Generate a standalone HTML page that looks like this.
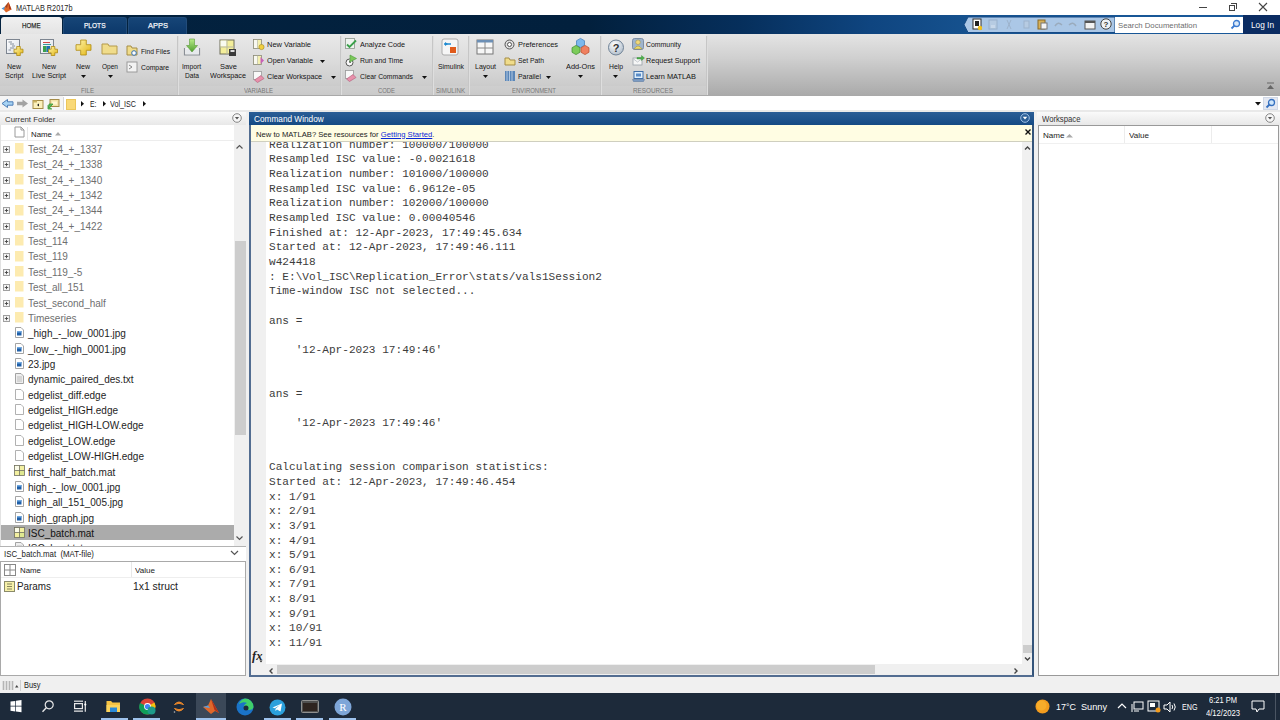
<!DOCTYPE html>
<html><head><meta charset="utf-8">
<style>
*{box-sizing:border-box;margin:0;padding:0}
html,body{width:1280px;height:720px;overflow:hidden;background:#f0f0f0;font-family:"Liberation Sans",sans-serif;position:relative}
body>div,div>div{position:absolute}
.t{white-space:pre}
svg{position:absolute;overflow:visible}
</style></head><body>
<div style="left:0px;top:0px;width:1280px;height:15px;background:#fff"></div>
<svg style="position:absolute;left:0px;top:0px" width="15" height="15" viewBox="0 0 15 15"><path d="M1.5 8.5 L5 6.5 L6.5 8.3 L4 10 Z" fill="#4f95d6"/><path d="M5 6.5 L8.5 2 L11.5 9.5 L6 12.5 L4 10 Z" fill="#e0692a"/><path d="M8.5 2 L11.5 9.5 L9.2 9 Z" fill="#a8361a"/><path d="M5 6.5 L8.5 2 L7 8 Z" fill="#7a2a18" opacity="0.6"/></svg>
<div class="t" style="left:16px;top:3.97px;font-size:8.3px;line-height:8.3px;color:#222;font-family:'Liberation Sans',sans-serif;transform:scaleX(0.8832);transform-origin:0 0;">MATLAB R2017b</div>
<div style="left:1199px;top:7px;width:8px;height:1px;background:#444"></div>
<div style="left:1229px;top:5px;width:6px;height:6px;border:1px solid #444"></div><div style="left:1231px;top:3px;width:6px;height:6px;border-top:1px solid #444;border-right:1px solid #444"></div>
<svg style="position:absolute;left:1258px;top:2px" width="10" height="10" viewBox="0 0 10 10"><path d="M1 1 L9 9 M9 1 L1 9" stroke="#444" stroke-width="1.1"/></svg>
<div style="left:0px;top:15px;width:1280px;height:19px;background:linear-gradient(90deg,#03223f 0%,#02203d 46%,#062f5c 58%,#0f4580 68%,#16528f 76%,#1a5a9c 100%)"></div>
<div style="left:1px;top:17px;width:61px;height:17px;background:linear-gradient(#f0f0f0,#e4e4e4);border-radius:3px 3px 0 0"></div>
<div class="t" style="left:22px;top:21.83px;font-size:8px;line-height:8px;color:#2a2a2a;font-family:'Liberation Sans',sans-serif;transform:scaleX(0.7708);transform-origin:0 0;-webkit-text-stroke:0.25px #2a2a2a">HOME</div>
<div style="left:63px;top:17px;width:64px;height:17px;background:linear-gradient(#164577,#0c386a);border:1px solid #224c7a;border-bottom:none;border-radius:3px 3px 0 0"></div>
<div class="t" style="left:84px;top:21.83px;font-size:8px;line-height:8px;color:#f4f6fa;font-family:'Liberation Sans',sans-serif;transform:scaleX(0.8196);transform-origin:0 0;-webkit-text-stroke:0.25px #f4f6fa">PLOTS</div>
<div style="left:128px;top:17px;width:59px;height:17px;background:linear-gradient(#164577,#0c386a);border:1px solid #224c7a;border-bottom:none;border-radius:3px 3px 0 0"></div>
<div class="t" style="left:148px;top:21.83px;font-size:8px;line-height:8px;color:#f4f6fa;font-family:'Liberation Sans',sans-serif;transform:scaleX(0.9370);transform-origin:0 0;-webkit-text-stroke:0.25px #f4f6fa">APPS</div>
<svg style="position:absolute;left:962px;top:16px" width="153" height="18" viewBox="0 0 153 18"><path d="M6 1 H153 V16.5 H6 L2 8.75 Z" fill="#abc7e6" stroke="#164a85" stroke-width="1"/></svg>
<svg style="position:absolute;left:972px;top:18px" width="10" height="12" viewBox="0 0 10 12"><rect x="1" y="1" width="8" height="10" fill="#fff" stroke="#333"/><rect x="3" y="3" width="4" height="5" fill="#222"/><circle cx="8" cy="10" r="2.2" fill="#f3c11b"/></svg>
<svg style="position:absolute;left:988px;top:19px" width="10" height="11" viewBox="0 0 10 11"><rect x="1" y="1" width="8" height="9" fill="#b6cbe2" stroke="#98b0cb"/><rect x="3" y="6" width="4" height="3" fill="#c8d8ea"/></svg>
<svg style="position:absolute;left:1004px;top:19px" width="10" height="11" viewBox="0 0 10 11"><path d="M3 10 L7 1 M7 10 L3 1" stroke="#9db3cc" stroke-width="1"/></svg>
<svg style="position:absolute;left:1020px;top:19px" width="10" height="11" viewBox="0 0 10 11"><rect x="4" y="2" width="5" height="7" fill="#b6cbe2" stroke="#9db3cc"/></svg>
<svg style="position:absolute;left:1037px;top:18px" width="11" height="12" viewBox="0 0 11 12"><rect x="1" y="2" width="7" height="9" fill="#d6b15a" stroke="#8a6a28"/><rect x="4" y="5" width="6" height="6" fill="#f4f4f4" stroke="#777"/></svg>
<svg style="position:absolute;left:1053px;top:19px" width="11" height="11" viewBox="0 0 11 11"><path d="M2 7 Q5 2 9 6" stroke="#9aabbd" stroke-width="1.5" fill="none"/></svg>
<svg style="position:absolute;left:1067px;top:19px" width="11" height="11" viewBox="0 0 11 11"><path d="M2 6 Q6 2 9 7" stroke="#9aabbd" stroke-width="1.5" fill="none"/></svg>
<svg style="position:absolute;left:1084px;top:19px" width="12" height="11" viewBox="0 0 12 11"><rect x="1" y="2" width="10" height="8" fill="#f2f2f2" stroke="#555"/><rect x="1" y="2" width="10" height="2" fill="#555"/></svg>
<svg style="position:absolute;left:1100px;top:18px" width="12" height="12" viewBox="0 0 12 12"><circle cx="6" cy="6" r="5.2" fill="#eef2f6" stroke="#444" stroke-width="1"/><text x="6" y="9" font-size="8" text-anchor="middle" font-family="Liberation Sans" font-weight="bold" fill="#333">?</text></svg>
<div style="left:1115px;top:17px;width:128px;height:16px;background:#fff"></div>
<div class="t" style="left:1118px;top:22.03px;font-size:8px;line-height:8px;color:#6d6d6d;font-family:'Liberation Sans',sans-serif;transform:scaleX(0.9707);transform-origin:0 0;">Search Documentation</div>
<svg style="position:absolute;left:1230px;top:19px" width="11" height="11" viewBox="0 0 11 11"><circle cx="6.5" cy="4.5" r="3" fill="#dbe9f8" stroke="#3d7bd0" stroke-width="1.3"/><path d="M4.5 6.5 L1.5 9.5" stroke="#3d7bd0" stroke-width="1.8"/></svg>
<div style="left:1243px;top:15px;width:37px;height:19px;background:#0b2c62"></div>
<div class="t" style="left:1251px;top:20.57px;font-size:8.3px;line-height:8.3px;color:#ffffff;font-family:'Liberation Sans',sans-serif;transform:scaleX(0.9967);transform-origin:0 0;">Log In</div>
<div style="left:0px;top:34px;width:1280px;height:62px;background:linear-gradient(#e4e4e4 0%,#cfcfcf 40%,#a9a9a9 100%)"></div>
<div style="left:0px;top:34px;width:706px;height:52px;background:linear-gradient(#e9e9e9 0%,#dcdcdc 50%,#cbcbcb 100%)"></div>
<div style="left:0px;top:86px;width:706px;height:10px;background:linear-gradient(#cfcfcf,#c9c9c9)"></div>
<div style="left:0px;top:95px;width:1280px;height:1px;background:#a9a9a9"></div>
<div style="left:177px;top:36px;width:1px;height:59px;background:#c6c6c6"></div>
<div style="left:178px;top:36px;width:1px;height:59px;background:#dedede"></div>
<div style="left:340px;top:36px;width:1px;height:59px;background:#c6c6c6"></div>
<div style="left:341px;top:36px;width:1px;height:59px;background:#dedede"></div>
<div style="left:432px;top:36px;width:1px;height:59px;background:#c6c6c6"></div>
<div style="left:433px;top:36px;width:1px;height:59px;background:#dedede"></div>
<div style="left:468px;top:36px;width:1px;height:59px;background:#c6c6c6"></div>
<div style="left:469px;top:36px;width:1px;height:59px;background:#dedede"></div>
<div style="left:600px;top:36px;width:1px;height:59px;background:#c6c6c6"></div>
<div style="left:601px;top:36px;width:1px;height:59px;background:#dedede"></div>
<div style="left:706px;top:36px;width:1px;height:59px;background:#c6c6c6"></div>
<div style="left:707px;top:36px;width:1px;height:59px;background:#dedede"></div>
<div class="t" style="left:80.5px;top:88.00px;font-size:6.5px;line-height:6.5px;color:#777777;font-family:'Liberation Sans',sans-serif;transform:scaleX(0.9470);transform-origin:0 0;">FILE</div>
<div class="t" style="left:243.5px;top:88.00px;font-size:6.5px;line-height:6.5px;color:#777777;font-family:'Liberation Sans',sans-serif;transform:scaleX(0.9262);transform-origin:0 0;">VARIABLE</div>
<div class="t" style="left:377.5px;top:88.00px;font-size:6.5px;line-height:6.5px;color:#777777;font-family:'Liberation Sans',sans-serif;transform:scaleX(0.9052);transform-origin:0 0;">CODE</div>
<div class="t" style="left:435.5px;top:88.00px;font-size:6.5px;line-height:6.5px;color:#777777;font-family:'Liberation Sans',sans-serif;transform:scaleX(0.9446);transform-origin:0 0;">SIMULINK</div>
<div class="t" style="left:512.0px;top:88.00px;font-size:6.5px;line-height:6.5px;color:#777777;font-family:'Liberation Sans',sans-serif;transform:scaleX(0.9161);transform-origin:0 0;">ENVIRONMENT</div>
<div class="t" style="left:633.0px;top:88.00px;font-size:6.5px;line-height:6.5px;color:#777777;font-family:'Liberation Sans',sans-serif;transform:scaleX(0.9715);transform-origin:0 0;">RESOURCES</div>
<svg style="position:absolute;left:5px;top:38px" width="20" height="19" viewBox="0 0 20 19"><defs><linearGradient id="gp" x1="0" y1="0" x2="1" y2="1"><stop offset="0" stop-color="#fff6b0"/><stop offset="1" stop-color="#e2b410"/></linearGradient><linearGradient id="gd" x1="0" y1="0" x2="1" y2="1"><stop offset="0" stop-color="#ffffff"/><stop offset="1" stop-color="#d8dde6"/></linearGradient></defs><rect x="1.5" y="1.5" width="13" height="14" fill="url(#gd)" stroke="#7d8590" stroke-width="1"/><path d="M3.5 4 H7 M5 6 H9 M7 8 H10 M5 10 H9 M3.5 12 H6" stroke="#6a7686" stroke-width="0.8"/><path d="M11.7 8.5 H15.3 V11.2 H18.0 V14.8 H15.3 V17.5 H11.7 V14.8 H9.0 V11.2 H11.7 Z" fill="url(#gp)" stroke="#b08a10" stroke-width="0.8"/></svg>
<div class="t" style="left:7.0px;top:62.90px;font-size:7.8px;line-height:7.8px;color:#141414;font-family:'Liberation Sans',sans-serif;transform:scaleX(0.8972);transform-origin:0 0;">New</div>
<div class="t" style="left:4.75px;top:71.90px;font-size:7.8px;line-height:7.8px;color:#141414;font-family:'Liberation Sans',sans-serif;transform:scaleX(0.9278);transform-origin:0 0;">Script</div>
<svg style="position:absolute;left:39px;top:38px" width="20" height="19" viewBox="0 0 20 19"><rect x="1.5" y="1.5" width="13" height="14" fill="url(#gd)" stroke="#7d8590" stroke-width="1"/><path d="M4 4.5 H11" stroke="#d04848" stroke-width="1"/><path d="M4 6.5 H12" stroke="#3a9a9a" stroke-width="1"/><rect x="4" y="8" width="3.5" height="6" fill="#3aa04a"/><rect x="7.5" y="8" width="3.5" height="6" fill="#1f70b0"/><path d="M12.2 8.5 H15.8 V11.2 H18.5 V14.8 H15.8 V17.5 H12.2 V14.8 H9.5 V11.2 H12.2 Z" fill="url(#gp)" stroke="#b08a10" stroke-width="0.8"/></svg>
<div class="t" style="left:42.0px;top:62.90px;font-size:7.8px;line-height:7.8px;color:#141414;font-family:'Liberation Sans',sans-serif;transform:scaleX(0.8972);transform-origin:0 0;">New</div>
<div class="t" style="left:32.0px;top:71.90px;font-size:7.8px;line-height:7.8px;color:#141414;font-family:'Liberation Sans',sans-serif;transform:scaleX(0.9337);transform-origin:0 0;">Live Script</div>
<svg style="position:absolute;left:75px;top:39px" width="18" height="17" viewBox="0 0 18 17"><path d="M5.7 1.0 H11.3 V5.7 H16.0 V11.3 H11.3 V16.0 H5.7 V11.3 H1.0 V5.7 H5.7 Z" fill="url(#gp)" stroke="#b08a10" stroke-width="0.8"/></svg>
<div class="t" style="left:76.0px;top:62.90px;font-size:7.8px;line-height:7.8px;color:#141414;font-family:'Liberation Sans',sans-serif;transform:scaleX(0.8972);transform-origin:0 0;">New</div>
<svg style="position:absolute;left:80.5px;top:74.5px" width="6" height="4" viewBox="0 0 6 4"><path d="M0 0 H5 L2.5 3 Z" fill="#111"/></svg>
<svg style="position:absolute;left:101px;top:42px" width="18" height="13" viewBox="0 0 18 13"><path d="M1 2 H7 L8 4 H16 V12 H1 Z" fill="#f0dc8a" stroke="#b49a4a"/></svg>
<div class="t" style="left:102.0px;top:62.90px;font-size:7.8px;line-height:7.8px;color:#141414;font-family:'Liberation Sans',sans-serif;transform:scaleX(0.8385);transform-origin:0 0;">Open</div>
<svg style="position:absolute;left:107.5px;top:74.5px" width="6" height="4" viewBox="0 0 6 4"><path d="M0 0 H5 L2.5 3 Z" fill="#111"/></svg>
<svg style="position:absolute;left:126px;top:45px" width="13" height="12" viewBox="0 0 13 12"><path d="M1 1 H5 L6 3 H11 V10 H1 Z" fill="#f0dc8a" stroke="#a58d45"/><circle cx="8" cy="8" r="2.3" fill="#fff" stroke="#3570b0"/></svg>
<div class="t" style="left:141px;top:48.40px;font-size:7.8px;line-height:7.8px;color:#141414;font-family:'Liberation Sans',sans-serif;transform:scaleX(0.8577);transform-origin:0 0;">Find Files</div>
<svg style="position:absolute;left:126px;top:61px" width="12" height="12" viewBox="0 0 12 12"><rect x="1" y="1" width="10" height="10" fill="#f3f3f3" stroke="#9a9a9a"/><path d="M3 4 L6 6 L3 8" stroke="#888" fill="none"/></svg>
<div class="t" style="left:141px;top:64.40px;font-size:7.8px;line-height:7.8px;color:#141414;font-family:'Liberation Sans',sans-serif;transform:scaleX(0.8728);transform-origin:0 0;">Compare</div>
<svg style="position:absolute;left:183px;top:38px" width="18" height="19" viewBox="0 0 18 19"><defs><linearGradient id="ga" x1="0" y1="0" x2="0" y2="1"><stop offset="0" stop-color="#b8ec88"/><stop offset="1" stop-color="#4f9e2e"/></linearGradient></defs><path d="M1.5 10 V17 H16.5 V10" fill="#f4f4f4" stroke="#8a8f96" stroke-width="1.2"/><rect x="3" y="11" width="12" height="5" fill="#e6e9ec"/><path d="M6.5 1 H11.5 V7.5 H14.5 L9 14 L3.5 7.5 H6.5 Z" fill="url(#ga)" stroke="#5a9a3a" stroke-width="0.6"/></svg>
<div class="t" style="left:182.0px;top:62.90px;font-size:7.8px;line-height:7.8px;color:#141414;font-family:'Liberation Sans',sans-serif;transform:scaleX(0.8595);transform-origin:0 0;">Import</div>
<div class="t" style="left:184.5px;top:71.90px;font-size:7.8px;line-height:7.8px;color:#141414;font-family:'Liberation Sans',sans-serif;transform:scaleX(0.8497);transform-origin:0 0;">Data</div>
<svg style="position:absolute;left:219px;top:39px" width="18" height="17" viewBox="0 0 18 17"><rect x="1" y="1" width="14" height="14" fill="#f3ee9a" stroke="#6e6e5a" stroke-width="1"/><rect x="1.5" y="1.5" width="6" height="6" fill="#f8faf0"/><path d="M8 1 V15 M1 8 H15" stroke="#b9b9a0" stroke-width="1"/><rect x="10" y="10" width="7" height="7" fill="#3a3a3a"/><rect x="11.5" y="11" width="4" height="2" fill="#ddd"/></svg>
<div class="t" style="left:219.5px;top:62.90px;font-size:7.8px;line-height:7.8px;color:#141414;font-family:'Liberation Sans',sans-serif;transform:scaleX(0.9562);transform-origin:0 0;">Save</div>
<div class="t" style="left:210.0px;top:71.90px;font-size:7.8px;line-height:7.8px;color:#141414;font-family:'Liberation Sans',sans-serif;transform:scaleX(0.9261);transform-origin:0 0;">Workspace</div>
<svg style="position:absolute;left:253px;top:39px" width="12" height="11" viewBox="0 0 12 11"><rect x="0.5" y="0.5" width="8" height="9" fill="#f4f0b0" stroke="#8a8a7a" stroke-width="0.8"/><rect x="1" y="1" width="3.5" height="8" fill="#f8f8f0"/><path d="M4.5 0.5 V9.5" stroke="#b0b0a0" stroke-width="0.6"/><circle cx="8.5" cy="8" r="2.6" fill="#f2d040" stroke="#a08820" stroke-width="0.6"/></svg>
<div class="t" style="left:267px;top:40.90px;font-size:7.8px;line-height:7.8px;color:#141414;font-family:'Liberation Sans',sans-serif;transform:scaleX(0.9605);transform-origin:0 0;">New Variable</div>
<svg style="position:absolute;left:253px;top:55px" width="12" height="11" viewBox="0 0 12 11"><rect x="0.5" y="0.5" width="8" height="9" fill="#f4f0b0" stroke="#8a8a7a" stroke-width="0.8"/><rect x="1" y="1" width="3.5" height="8" fill="#f8f8f0"/><path d="M4.5 0.5 V9.5" stroke="#b0b0a0" stroke-width="0.6"/><path d="M7.5 2 L11 5.5 L7.5 9 Z" fill="#c860b8"/></svg>
<div class="t" style="left:267px;top:56.90px;font-size:7.8px;line-height:7.8px;color:#141414;font-family:'Liberation Sans',sans-serif;transform:scaleX(0.9333);transform-origin:0 0;">Open Variable</div>
<svg style="position:absolute;left:319.5px;top:59.5px" width="6" height="4" viewBox="0 0 6 4"><path d="M0 0 H5 L2.5 3 Z" fill="#111"/></svg>
<svg style="position:absolute;left:253px;top:71px" width="12" height="12" viewBox="0 0 12 12"><rect x="0.5" y="0.5" width="8" height="8" fill="#f8f8f8" stroke="#9a9a9a" stroke-width="0.8"/><path d="M1.5 9 L8 4.5 L11 7.5 L4.5 11.5 Z" fill="#e890aa" stroke="#b05a78" stroke-width="0.6"/></svg>
<div class="t" style="left:267px;top:72.90px;font-size:7.8px;line-height:7.8px;color:#141414;font-family:'Liberation Sans',sans-serif;transform:scaleX(0.9216);transform-origin:0 0;">Clear Workspace</div>
<svg style="position:absolute;left:330.5px;top:75.5px" width="6" height="4" viewBox="0 0 6 4"><path d="M0 0 H5 L2.5 3 Z" fill="#111"/></svg>
<svg style="position:absolute;left:345px;top:38px" width="13" height="12" viewBox="0 0 13 12"><rect x="0.5" y="0.5" width="9" height="10" fill="#eef3ee" stroke="#8a948a" stroke-width="0.8"/><path d="M2 6.5 L4.5 9 L11 2.5" stroke="#3aa04a" stroke-width="1.8" fill="none"/></svg>
<div class="t" style="left:360px;top:40.90px;font-size:7.8px;line-height:7.8px;color:#141414;font-family:'Liberation Sans',sans-serif;transform:scaleX(0.9266);transform-origin:0 0;">Analyze Code</div>
<svg style="position:absolute;left:345px;top:54px" width="13" height="13" viewBox="0 0 13 13"><circle cx="4.5" cy="8.5" r="3.5" fill="#fafafa" stroke="#555" stroke-width="1"/><path d="M4.5 6.5 V8.5 H6" stroke="#555" stroke-width="0.8" fill="none"/><path d="M5 1 L11.5 4.5 L5 8 Z" fill="#7cc85a" stroke="#4a9a3a" stroke-width="0.6"/></svg>
<div class="t" style="left:360px;top:56.90px;font-size:7.8px;line-height:7.8px;color:#141414;font-family:'Liberation Sans',sans-serif;transform:scaleX(0.8855);transform-origin:0 0;">Run and Time</div>
<svg style="position:absolute;left:345px;top:70px" width="13" height="12" viewBox="0 0 13 12"><rect x="0.5" y="0.5" width="8" height="8" fill="#f8f8f8" stroke="#9a9a9a" stroke-width="0.8"/><path d="M1.5 9 L8 4.5 L11 7.5 L4.5 11.5 Z" fill="#e890aa" stroke="#b05a78" stroke-width="0.6"/></svg>
<div class="t" style="left:360px;top:72.90px;font-size:7.8px;line-height:7.8px;color:#141414;font-family:'Liberation Sans',sans-serif;transform:scaleX(0.8733);transform-origin:0 0;">Clear Commands</div>
<svg style="position:absolute;left:421.5px;top:75.5px" width="6" height="4" viewBox="0 0 6 4"><path d="M0 0 H5 L2.5 3 Z" fill="#111"/></svg>
<svg style="position:absolute;left:441px;top:38px" width="19" height="19" viewBox="0 0 19 19"><rect x="1" y="1" width="16" height="16" rx="2" fill="#f6f6f6" stroke="#aaa"/><path d="M3 6 H10" stroke="#1e8ad0" stroke-width="1.5"/><path d="M4 4 L7 6 L4 8 Z" fill="#1e8ad0"/><rect x="9" y="9" width="6" height="6" fill="#e05a1a"/></svg>
<div class="t" style="left:438px;top:62.90px;font-size:7.8px;line-height:7.8px;color:#141414;font-family:'Liberation Sans',sans-serif;transform:scaleX(0.8821);transform-origin:0 0;">Simulink</div>
<svg style="position:absolute;left:476px;top:39px" width="18" height="16" viewBox="0 0 18 16"><rect x="1" y="1" width="16" height="14" fill="#f7f7f7" stroke="#777"/><rect x="1" y="1" width="16" height="2.5" fill="#6c8fb5"/><path d="M9 3 V15 M1 9 H17" stroke="#888"/></svg>
<div class="t" style="left:475.0px;top:62.90px;font-size:7.8px;line-height:7.8px;color:#141414;font-family:'Liberation Sans',sans-serif;transform:scaleX(0.8967);transform-origin:0 0;">Layout</div>
<svg style="position:absolute;left:483.0px;top:74.5px" width="6" height="4" viewBox="0 0 6 4"><path d="M0 0 H5 L2.5 3 Z" fill="#111"/></svg>
<svg style="position:absolute;left:504px;top:39px" width="11" height="11" viewBox="0 0 11 11"><circle cx="5.5" cy="5.5" r="4.5" fill="#ddd" stroke="#555"/><circle cx="5.5" cy="5.5" r="2" fill="#fff" stroke="#555"/></svg>
<div class="t" style="left:518px;top:40.90px;font-size:7.8px;line-height:7.8px;color:#141414;font-family:'Liberation Sans',sans-serif;transform:scaleX(0.9511);transform-origin:0 0;">Preferences</div>
<svg style="position:absolute;left:504px;top:55px" width="12" height="11" viewBox="0 0 12 11"><path d="M1 3 H5 L6 5 H11 V10 H1 Z" fill="#f0dc8a" stroke="#a58d45"/></svg>
<div class="t" style="left:518px;top:56.90px;font-size:7.8px;line-height:7.8px;color:#141414;font-family:'Liberation Sans',sans-serif;transform:scaleX(0.8690);transform-origin:0 0;">Set Path</div>
<svg style="position:absolute;left:504px;top:70px" width="12" height="12" viewBox="0 0 12 12"><rect x="1" y="1" width="10" height="10" fill="#5a86b8"/><path d="M3 1 V11 M5.5 1 V11 M8 1 V11" stroke="#c5d7ea" stroke-width="0.8"/></svg>
<div class="t" style="left:518px;top:72.90px;font-size:7.8px;line-height:7.8px;color:#141414;font-family:'Liberation Sans',sans-serif;transform:scaleX(0.8841);transform-origin:0 0;">Parallel</div>
<svg style="position:absolute;left:545.5px;top:75.5px" width="6" height="4" viewBox="0 0 6 4"><path d="M0 0 H5 L2.5 3 Z" fill="#111"/></svg>
<svg style="position:absolute;left:571px;top:38px" width="19" height="18" viewBox="0 0 19 18"><polygon points="9.50,0.40 13.48,2.70 13.48,7.30 9.50,9.60 5.52,7.30 5.52,2.70" fill="#7cb8ec" stroke="#3a78b8" stroke-width="0.7"/><polygon points="5.00,7.40 8.98,9.70 8.98,14.30 5.00,16.60 1.02,14.30 1.02,9.70" fill="#7ccc5a" stroke="#3a8a2a" stroke-width="0.7"/><polygon points="14.00,7.40 17.98,9.70 17.98,14.30 14.00,16.60 10.02,14.30 10.02,9.70" fill="#f08060" stroke="#b84a2a" stroke-width="0.7"/></svg>
<div class="t" style="left:566.0px;top:62.90px;font-size:7.8px;line-height:7.8px;color:#141414;font-family:'Liberation Sans',sans-serif;transform:scaleX(0.9421);transform-origin:0 0;">Add-Ons</div>
<svg style="position:absolute;left:578.0px;top:74.5px" width="6" height="4" viewBox="0 0 6 4"><path d="M0 0 H5 L2.5 3 Z" fill="#111"/></svg>
<svg style="position:absolute;left:607px;top:39px" width="18" height="18" viewBox="0 0 18 18"><defs><radialGradient id="gh" cx="0.4" cy="0.3" r="0.8"><stop offset="0" stop-color="#ffffff"/><stop offset="1" stop-color="#a9b7c6"/></radialGradient></defs><circle cx="9" cy="8.5" r="7.5" fill="url(#gh)" stroke="#6f8296" stroke-width="1"/><text x="9" y="12.5" font-size="11" text-anchor="middle" font-family="Liberation Sans" font-weight="bold" fill="#333">?</text></svg>
<div class="t" style="left:608.5px;top:62.90px;font-size:7.8px;line-height:7.8px;color:#141414;font-family:'Liberation Sans',sans-serif;transform:scaleX(0.8727);transform-origin:0 0;">Help</div>
<svg style="position:absolute;left:613.0px;top:74.5px" width="6" height="4" viewBox="0 0 6 4"><path d="M0 0 H5 L2.5 3 Z" fill="#111"/></svg>
<svg style="position:absolute;left:632px;top:38px" width="13" height="12" viewBox="0 0 13 12"><rect x="0.5" y="0.5" width="11" height="11" rx="2" fill="#9fb4cc" stroke="#6b7f99" stroke-width="0.8"/><circle cx="6" cy="4.2" r="2.3" fill="#f1d97a" stroke="#9a8a40" stroke-width="0.5"/><path d="M2 11 Q6 5 10 11 Z" fill="#eedc6a" stroke="#9a8a40" stroke-width="0.5"/></svg>
<div class="t" style="left:646px;top:40.90px;font-size:7.8px;line-height:7.8px;color:#141414;font-family:'Liberation Sans',sans-serif;transform:scaleX(0.8874);transform-origin:0 0;">Community</div>
<svg style="position:absolute;left:632px;top:54px" width="13" height="12" viewBox="0 0 13 12"><rect x="1" y="4" width="9" height="7" fill="#f6f6f6" stroke="#9aa0a8" stroke-width="0.8"/><path d="M1.5 5 L5.5 8 L9.5 5" stroke="#b0b6bd" stroke-width="0.7" fill="none"/><path d="M5 3.5 H9.5 V1.5 L12.5 4 L9.5 6.5 V5 H5 Z" fill="#4cb04a" stroke="#2f8a2f" stroke-width="0.4"/></svg>
<div class="t" style="left:646px;top:56.90px;font-size:7.8px;line-height:7.8px;color:#141414;font-family:'Liberation Sans',sans-serif;transform:scaleX(0.9225);transform-origin:0 0;">Request Support</div>
<svg style="position:absolute;left:632px;top:71px" width="13" height="11" viewBox="0 0 13 11"><rect x="2" y="0.5" width="9" height="7" fill="#dfeefa" stroke="#3f6ea8" stroke-width="1"/><rect x="4" y="2.5" width="5" height="3" fill="#5a8cc8"/><path d="M0.5 8.5 H12.5 L11.5 10.5 H1.5 Z" fill="#7c9cc4" stroke="#4f6f98" stroke-width="0.5"/></svg>
<div class="t" style="left:646px;top:72.90px;font-size:7.8px;line-height:7.8px;color:#141414;font-family:'Liberation Sans',sans-serif;transform:scaleX(0.9479);transform-origin:0 0;">Learn MATLAB</div>
<svg style="position:absolute;left:1266px;top:82px" width="9" height="8" viewBox="0 0 9 8"><path d="M1 1 H8" stroke="#666"/><path d="M1 7 L4.5 3 L8 7 Z" fill="#666"/></svg>
<div style="left:0px;top:96px;width:1280px;height:15px;background:#fff"></div>
<div style="left:0px;top:96px;width:63px;height:15px;background:#f5f5f5"></div>
<div style="left:63px;top:97px;width:1px;height:13px;background:#d8d8d8"></div>
<div style="left:0px;top:110px;width:1280px;height:2px;background:#e9e9e9"></div>
<svg style="position:absolute;left:1px;top:99px" width="13" height="10" viewBox="0 0 13 10"><path d="M1 4.5 L6.5 0.5 V2.8 H12 V6.2 H6.5 V8.5 Z" fill="#a8d4f4" stroke="#4f7fb8" stroke-width="1"/></svg>
<svg style="position:absolute;left:16px;top:99px" width="13" height="10" viewBox="0 0 13 10"><path d="M12 4.5 L6.5 0.5 V2.8 H1 V6.2 H6.5 V8.5 Z" fill="#a3a3a3"/></svg>
<svg style="position:absolute;left:32px;top:99px" width="12" height="11" viewBox="0 0 12 11"><rect x="1" y="1.5" width="10" height="8" fill="#fbf0bc" stroke="#a58c48" stroke-width="1"/><rect x="1" y="1.5" width="4" height="2" fill="#c9b060"/><path d="M5 6 L7 4.5 L7 7.5 Z" fill="#222"/></svg>
<svg style="position:absolute;left:47px;top:98px" width="13" height="12" viewBox="0 0 13 12"><rect x="3" y="1.5" width="9" height="7" fill="#f3e3a8" stroke="#a58c48" stroke-width="1"/><rect x="5" y="3.5" width="5" height="3" fill="#fff6d0"/><path d="M2 6 L6 6 L2 10 Z M1 7 V11 H5" fill="#5cb85c" stroke="#3a9a3a" stroke-width="0.8"/></svg>
<div style="left:66px;top:99px;width:10px;height:11px;background:#f9d978;border:1px solid #ecc65a"></div>
<svg style="position:absolute;left:81px;top:101px" width="3" height="6" viewBox="0 0 3 6"><path d="M0 0 L3 2.75 L0 5.5 Z" fill="#111"/></svg>
<svg style="position:absolute;left:103px;top:101px" width="3" height="6" viewBox="0 0 3 6"><path d="M0 0 L3 2.75 L0 5.5 Z" fill="#111"/></svg>
<svg style="position:absolute;left:143px;top:101px" width="3" height="6" viewBox="0 0 3 6"><path d="M0 0 L3 2.75 L0 5.5 Z" fill="#111"/></svg>
<div class="t" style="left:90px;top:100.56px;font-size:8.2px;line-height:8.2px;color:#222;font-family:'Liberation Sans',sans-serif;transform:scaleX(0.8390);transform-origin:0 0;">E:</div>
<div class="t" style="left:110px;top:100.56px;font-size:8.2px;line-height:8.2px;color:#222;font-family:'Liberation Sans',sans-serif;transform:scaleX(0.8775);transform-origin:0 0;">Vol_ISC</div>
<svg style="position:absolute;left:1255px;top:102px" width="7" height="4" viewBox="0 0 7 4"><path d="M0 0 H6 L3 3.5 Z" fill="#111"/></svg>
<div style="left:1263px;top:97px;width:15px;height:13px;background:#e4e8f2;border:1px solid #d0d8e6"></div>
<svg style="position:absolute;left:1265px;top:98px" width="11" height="11" viewBox="0 0 11 11"><circle cx="6.5" cy="4.5" r="3" fill="#cfe6fb" stroke="#3570c0" stroke-width="1.3"/><path d="M4.5 6.5 L1.5 9.5" stroke="#3570c0" stroke-width="1.8"/></svg>
<div style="left:0px;top:112px;width:246px;height:564px;background:#fff"></div>
<div style="left:0px;top:112px;width:246px;height:13px;background:linear-gradient(#fafafa,#e8e8e8)"></div>
<div class="t" style="left:5px;top:116.40px;font-size:7.8px;line-height:7.8px;color:#333;font-family:'Liberation Sans',sans-serif;transform:scaleX(1.0003);transform-origin:0 0;">Current Folder</div>
<svg style="position:absolute;left:232px;top:113px" width="10" height="10" viewBox="0 0 10 10"><circle cx="5" cy="5" r="4.3" fill="#f6f6f6" stroke="#7a7a7a" stroke-width="0.9"/><path d="M2.9 3.9 H7.1 L5 6.4 Z" fill="#555"/></svg>
<div style="left:0px;top:125px;width:234px;height:16px;background:#fff"></div>
<svg style="position:absolute;left:14px;top:126px" width="11" height="12" viewBox="0 0 11 12"><path d="M1 1 H7 L10 4 V11 H1 Z" fill="#fff" stroke="#9a9a9a"/><path d="M7 1 V4 H10" fill="none" stroke="#9a9a9a"/></svg>
<div style="left:27px;top:127px;width:1px;height:14px;background:#e6e6e6"></div>
<div class="t" style="left:31px;top:130.83px;font-size:8px;line-height:8px;color:#222;font-family:'Liberation Sans',sans-serif;transform:scaleX(0.9840);transform-origin:0 0;">Name</div>
<svg style="position:absolute;left:55px;top:132px" width="6" height="4" viewBox="0 0 6 4"><path d="M0 3.5 L3 0 L6 3.5 Z" fill="#aaa"/></svg>
<div style="left:0;top:141px;width:234px;height:405px;overflow:hidden">
<div style="left:0px;top:384.0px;width:234px;height:15px;background:#ababab"></div>
<svg style="position:absolute;left:3px;top:5px" width="7" height="7" viewBox="0 0 7 7"><rect x="0.5" y="0.5" width="6" height="6" fill="#f4f4f4" stroke="#a0a0a0"/><path d="M1.8 3.5 H5.2 M3.5 1.8 V5.2" stroke="#444" stroke-width="0.9"/></svg>
<svg style="position:absolute;left:15px;top:2.200000000000017px" width="9" height="11" viewBox="0 0 9 11"><rect x="0" y="0" width="8.5" height="10.5" fill="#fdebb0"/></svg>
<div class="t" style="left:28px;top:3.94px;font-size:10px;line-height:10px;color:#6f6f6f;font-family:'Liberation Sans',sans-serif;transform:scaleX(1.0000);transform-origin:0 0;">Test_24_+_1337</div>
<svg style="position:absolute;left:3px;top:20px" width="7" height="7" viewBox="0 0 7 7"><rect x="0.5" y="0.5" width="6" height="6" fill="#f4f4f4" stroke="#a0a0a0"/><path d="M1.8 3.5 H5.2 M3.5 1.8 V5.2" stroke="#444" stroke-width="0.9"/></svg>
<svg style="position:absolute;left:15px;top:17.560000000000002px" width="9" height="11" viewBox="0 0 9 11"><rect x="0" y="0" width="8.5" height="10.5" fill="#fdebb0"/></svg>
<div class="t" style="left:28px;top:19.29px;font-size:10px;line-height:10px;color:#6f6f6f;font-family:'Liberation Sans',sans-serif;transform:scaleX(1.0000);transform-origin:0 0;">Test_24_+_1338</div>
<svg style="position:absolute;left:3px;top:36px" width="7" height="7" viewBox="0 0 7 7"><rect x="0.5" y="0.5" width="6" height="6" fill="#f4f4f4" stroke="#a0a0a0"/><path d="M1.8 3.5 H5.2 M3.5 1.8 V5.2" stroke="#444" stroke-width="0.9"/></svg>
<svg style="position:absolute;left:15px;top:32.920000000000016px" width="9" height="11" viewBox="0 0 9 11"><rect x="0" y="0" width="8.5" height="10.5" fill="#fdebb0"/></svg>
<div class="t" style="left:28px;top:34.66px;font-size:10px;line-height:10px;color:#6f6f6f;font-family:'Liberation Sans',sans-serif;transform:scaleX(1.0000);transform-origin:0 0;">Test_24_+_1340</div>
<svg style="position:absolute;left:3px;top:51px" width="7" height="7" viewBox="0 0 7 7"><rect x="0.5" y="0.5" width="6" height="6" fill="#f4f4f4" stroke="#a0a0a0"/><path d="M1.8 3.5 H5.2 M3.5 1.8 V5.2" stroke="#444" stroke-width="0.9"/></svg>
<svg style="position:absolute;left:15px;top:48.28000000000003px" width="9" height="11" viewBox="0 0 9 11"><rect x="0" y="0" width="8.5" height="10.5" fill="#fdebb0"/></svg>
<div class="t" style="left:28px;top:50.02px;font-size:10px;line-height:10px;color:#6f6f6f;font-family:'Liberation Sans',sans-serif;transform:scaleX(1.0000);transform-origin:0 0;">Test_24_+_1342</div>
<svg style="position:absolute;left:3px;top:66px" width="7" height="7" viewBox="0 0 7 7"><rect x="0.5" y="0.5" width="6" height="6" fill="#f4f4f4" stroke="#a0a0a0"/><path d="M1.8 3.5 H5.2 M3.5 1.8 V5.2" stroke="#444" stroke-width="0.9"/></svg>
<svg style="position:absolute;left:15px;top:63.640000000000015px" width="9" height="11" viewBox="0 0 9 11"><rect x="0" y="0" width="8.5" height="10.5" fill="#fdebb0"/></svg>
<div class="t" style="left:28px;top:65.38px;font-size:10px;line-height:10px;color:#6f6f6f;font-family:'Liberation Sans',sans-serif;transform:scaleX(1.0000);transform-origin:0 0;">Test_24_+_1344</div>
<svg style="position:absolute;left:3px;top:82px" width="7" height="7" viewBox="0 0 7 7"><rect x="0.5" y="0.5" width="6" height="6" fill="#f4f4f4" stroke="#a0a0a0"/><path d="M1.8 3.5 H5.2 M3.5 1.8 V5.2" stroke="#444" stroke-width="0.9"/></svg>
<svg style="position:absolute;left:15px;top:79.0px" width="9" height="11" viewBox="0 0 9 11"><rect x="0" y="0" width="8.5" height="10.5" fill="#fdebb0"/></svg>
<div class="t" style="left:28px;top:80.73px;font-size:10px;line-height:10px;color:#6f6f6f;font-family:'Liberation Sans',sans-serif;transform:scaleX(1.0000);transform-origin:0 0;">Test_24_+_1422</div>
<svg style="position:absolute;left:3px;top:97px" width="7" height="7" viewBox="0 0 7 7"><rect x="0.5" y="0.5" width="6" height="6" fill="#f4f4f4" stroke="#a0a0a0"/><path d="M1.8 3.5 H5.2 M3.5 1.8 V5.2" stroke="#444" stroke-width="0.9"/></svg>
<svg style="position:absolute;left:15px;top:94.36000000000001px" width="9" height="11" viewBox="0 0 9 11"><rect x="0" y="0" width="8.5" height="10.5" fill="#fdebb0"/></svg>
<div class="t" style="left:28px;top:96.09px;font-size:10px;line-height:10px;color:#6f6f6f;font-family:'Liberation Sans',sans-serif;transform:scaleX(1.0000);transform-origin:0 0;">Test_114</div>
<svg style="position:absolute;left:3px;top:112px" width="7" height="7" viewBox="0 0 7 7"><rect x="0.5" y="0.5" width="6" height="6" fill="#f4f4f4" stroke="#a0a0a0"/><path d="M1.8 3.5 H5.2 M3.5 1.8 V5.2" stroke="#444" stroke-width="0.9"/></svg>
<svg style="position:absolute;left:15px;top:109.72000000000003px" width="9" height="11" viewBox="0 0 9 11"><rect x="0" y="0" width="8.5" height="10.5" fill="#fdebb0"/></svg>
<div class="t" style="left:28px;top:111.46px;font-size:10px;line-height:10px;color:#6f6f6f;font-family:'Liberation Sans',sans-serif;transform:scaleX(1.0000);transform-origin:0 0;">Test_119</div>
<svg style="position:absolute;left:3px;top:128px" width="7" height="7" viewBox="0 0 7 7"><rect x="0.5" y="0.5" width="6" height="6" fill="#f4f4f4" stroke="#a0a0a0"/><path d="M1.8 3.5 H5.2 M3.5 1.8 V5.2" stroke="#444" stroke-width="0.9"/></svg>
<svg style="position:absolute;left:15px;top:125.07999999999998px" width="9" height="11" viewBox="0 0 9 11"><rect x="0" y="0" width="8.5" height="10.5" fill="#fdebb0"/></svg>
<div class="t" style="left:28px;top:126.81px;font-size:10px;line-height:10px;color:#6f6f6f;font-family:'Liberation Sans',sans-serif;transform:scaleX(1.0000);transform-origin:0 0;">Test_119_-5</div>
<svg style="position:absolute;left:3px;top:143px" width="7" height="7" viewBox="0 0 7 7"><rect x="0.5" y="0.5" width="6" height="6" fill="#f4f4f4" stroke="#a0a0a0"/><path d="M1.8 3.5 H5.2 M3.5 1.8 V5.2" stroke="#444" stroke-width="0.9"/></svg>
<svg style="position:absolute;left:15px;top:140.44px" width="9" height="11" viewBox="0 0 9 11"><rect x="0" y="0" width="8.5" height="10.5" fill="#fdebb0"/></svg>
<div class="t" style="left:28px;top:142.17px;font-size:10px;line-height:10px;color:#6f6f6f;font-family:'Liberation Sans',sans-serif;transform:scaleX(1.0000);transform-origin:0 0;">Test_all_151</div>
<svg style="position:absolute;left:3px;top:159px" width="7" height="7" viewBox="0 0 7 7"><rect x="0.5" y="0.5" width="6" height="6" fill="#f4f4f4" stroke="#a0a0a0"/><path d="M1.8 3.5 H5.2 M3.5 1.8 V5.2" stroke="#444" stroke-width="0.9"/></svg>
<svg style="position:absolute;left:15px;top:155.8px" width="9" height="11" viewBox="0 0 9 11"><rect x="0" y="0" width="8.5" height="10.5" fill="#fdebb0"/></svg>
<div class="t" style="left:28px;top:157.53px;font-size:10px;line-height:10px;color:#6f6f6f;font-family:'Liberation Sans',sans-serif;transform:scaleX(1.0000);transform-origin:0 0;">Test_second_half</div>
<svg style="position:absolute;left:3px;top:174px" width="7" height="7" viewBox="0 0 7 7"><rect x="0.5" y="0.5" width="6" height="6" fill="#f4f4f4" stroke="#a0a0a0"/><path d="M1.8 3.5 H5.2 M3.5 1.8 V5.2" stroke="#444" stroke-width="0.9"/></svg>
<svg style="position:absolute;left:15px;top:171.16000000000003px" width="9" height="11" viewBox="0 0 9 11"><rect x="0" y="0" width="8.5" height="10.5" fill="#fdebb0"/></svg>
<div class="t" style="left:28px;top:172.90px;font-size:10px;line-height:10px;color:#6f6f6f;font-family:'Liberation Sans',sans-serif;transform:scaleX(1.0000);transform-origin:0 0;">Timeseries</div>
<svg style="position:absolute;left:15px;top:186.22000000000003px" width="9" height="12" viewBox="0 0 9 12"><path d="M0.5 0.5 H6 L8.5 3 V10.5 H0.5 Z" fill="#fff" stroke="#9a9a9a" stroke-width="0.9"/><rect x="2" y="4" width="4.5" height="4.5" fill="#1f5fa8"/><rect x="2" y="4" width="4.5" height="1.5" fill="#6fa8e0"/></svg>
<div class="t" style="left:28px;top:188.26px;font-size:10px;line-height:10px;color:#1e1e1e;font-family:'Liberation Sans',sans-serif;transform:scaleX(1.0000);transform-origin:0 0;">_high_-_low_0001.jpg</div>
<svg style="position:absolute;left:15px;top:201.58000000000004px" width="9" height="12" viewBox="0 0 9 12"><path d="M0.5 0.5 H6 L8.5 3 V10.5 H0.5 Z" fill="#fff" stroke="#9a9a9a" stroke-width="0.9"/><rect x="2" y="4" width="4.5" height="4.5" fill="#1f5fa8"/><rect x="2" y="4" width="4.5" height="1.5" fill="#6fa8e0"/></svg>
<div class="t" style="left:28px;top:203.62px;font-size:10px;line-height:10px;color:#1e1e1e;font-family:'Liberation Sans',sans-serif;transform:scaleX(1.0000);transform-origin:0 0;">_low_-_high_0001.jpg</div>
<svg style="position:absolute;left:15px;top:216.94px" width="9" height="12" viewBox="0 0 9 12"><path d="M0.5 0.5 H6 L8.5 3 V10.5 H0.5 Z" fill="#fff" stroke="#9a9a9a" stroke-width="0.9"/><rect x="2" y="4" width="4.5" height="4.5" fill="#1f5fa8"/><rect x="2" y="4" width="4.5" height="1.5" fill="#6fa8e0"/></svg>
<div class="t" style="left:28px;top:218.97px;font-size:10px;line-height:10px;color:#1e1e1e;font-family:'Liberation Sans',sans-serif;transform:scaleX(1.0000);transform-origin:0 0;">23.jpg</div>
<svg style="position:absolute;left:15px;top:232.29999999999995px" width="9" height="12" viewBox="0 0 9 12"><path d="M0.5 0.5 H6 L8.5 3 V10.5 H0.5 Z" fill="#eeeeee" stroke="#9a9a9a" stroke-width="0.9"/><path d="M2 4 H7 M2 6 H7 M2 8 H7" stroke="#b0b0b0" stroke-width="0.8"/></svg>
<div class="t" style="left:28px;top:234.33px;font-size:10px;line-height:10px;color:#1e1e1e;font-family:'Liberation Sans',sans-serif;transform:scaleX(1.0000);transform-origin:0 0;">dynamic_paired_des.txt</div>
<svg style="position:absolute;left:15px;top:247.65999999999997px" width="9" height="12" viewBox="0 0 9 12"><path d="M0.5 0.5 H6 L8.5 3 V10.5 H0.5 Z" fill="#fff" stroke="#a8a8a8" stroke-width="0.9"/></svg>
<div class="t" style="left:28px;top:249.69px;font-size:10px;line-height:10px;color:#1e1e1e;font-family:'Liberation Sans',sans-serif;transform:scaleX(1.0000);transform-origin:0 0;">edgelist_diff.edge</div>
<svg style="position:absolute;left:15px;top:263.02px" width="9" height="12" viewBox="0 0 9 12"><path d="M0.5 0.5 H6 L8.5 3 V10.5 H0.5 Z" fill="#fff" stroke="#a8a8a8" stroke-width="0.9"/></svg>
<div class="t" style="left:28px;top:265.06px;font-size:10px;line-height:10px;color:#1e1e1e;font-family:'Liberation Sans',sans-serif;transform:scaleX(1.0000);transform-origin:0 0;">edgelist_HIGH.edge</div>
<svg style="position:absolute;left:15px;top:278.38px" width="9" height="12" viewBox="0 0 9 12"><path d="M0.5 0.5 H6 L8.5 3 V10.5 H0.5 Z" fill="#fff" stroke="#a8a8a8" stroke-width="0.9"/></svg>
<div class="t" style="left:28px;top:280.42px;font-size:10px;line-height:10px;color:#1e1e1e;font-family:'Liberation Sans',sans-serif;transform:scaleX(1.0000);transform-origin:0 0;">edgelist_HIGH-LOW.edge</div>
<svg style="position:absolute;left:15px;top:293.74px" width="9" height="12" viewBox="0 0 9 12"><path d="M0.5 0.5 H6 L8.5 3 V10.5 H0.5 Z" fill="#fff" stroke="#a8a8a8" stroke-width="0.9"/></svg>
<div class="t" style="left:28px;top:295.78px;font-size:10px;line-height:10px;color:#1e1e1e;font-family:'Liberation Sans',sans-serif;transform:scaleX(1.0000);transform-origin:0 0;">edgelist_LOW.edge</div>
<svg style="position:absolute;left:15px;top:309.1px" width="9" height="12" viewBox="0 0 9 12"><path d="M0.5 0.5 H6 L8.5 3 V10.5 H0.5 Z" fill="#fff" stroke="#a8a8a8" stroke-width="0.9"/></svg>
<div class="t" style="left:28px;top:311.14px;font-size:10px;line-height:10px;color:#1e1e1e;font-family:'Liberation Sans',sans-serif;transform:scaleX(1.0000);transform-origin:0 0;">edgelist_LOW-HIGH.edge</div>
<svg style="position:absolute;left:14px;top:324.46000000000004px" width="11" height="11" viewBox="0 0 11 11"><rect x="0.5" y="0.5" width="10" height="10" fill="#f3f0a0" stroke="#6f6f60" stroke-width="0.8"/><rect x="1" y="1" width="4.5" height="4.5" fill="#fbfbe8"/><rect x="5.5" y="5.5" width="4.5" height="4.5" fill="#dfe890"/><path d="M5.5 0.5 V10.5 M0.5 5.5 H10.5" stroke="#6f6f60" stroke-width="0.8"/></svg>
<div class="t" style="left:28px;top:326.50px;font-size:10px;line-height:10px;color:#1e1e1e;font-family:'Liberation Sans',sans-serif;transform:scaleX(1.0000);transform-origin:0 0;">first_half_batch.mat</div>
<svg style="position:absolute;left:15px;top:339.81999999999994px" width="9" height="12" viewBox="0 0 9 12"><path d="M0.5 0.5 H6 L8.5 3 V10.5 H0.5 Z" fill="#fff" stroke="#9a9a9a" stroke-width="0.9"/><rect x="2" y="4" width="4.5" height="4.5" fill="#1f5fa8"/><rect x="2" y="4" width="4.5" height="1.5" fill="#6fa8e0"/></svg>
<div class="t" style="left:28px;top:341.85px;font-size:10px;line-height:10px;color:#1e1e1e;font-family:'Liberation Sans',sans-serif;transform:scaleX(1.0000);transform-origin:0 0;">high_-_low_0001.jpg</div>
<svg style="position:absolute;left:15px;top:355.17999999999995px" width="9" height="12" viewBox="0 0 9 12"><path d="M0.5 0.5 H6 L8.5 3 V10.5 H0.5 Z" fill="#fff" stroke="#9a9a9a" stroke-width="0.9"/><rect x="2" y="4" width="4.5" height="4.5" fill="#1f5fa8"/><rect x="2" y="4" width="4.5" height="1.5" fill="#6fa8e0"/></svg>
<div class="t" style="left:28px;top:357.21px;font-size:10px;line-height:10px;color:#1e1e1e;font-family:'Liberation Sans',sans-serif;transform:scaleX(1.0000);transform-origin:0 0;">high_all_151_005.jpg</div>
<svg style="position:absolute;left:15px;top:370.53999999999996px" width="9" height="12" viewBox="0 0 9 12"><path d="M0.5 0.5 H6 L8.5 3 V10.5 H0.5 Z" fill="#fff" stroke="#9a9a9a" stroke-width="0.9"/><rect x="2" y="4" width="4.5" height="4.5" fill="#1f5fa8"/><rect x="2" y="4" width="4.5" height="1.5" fill="#6fa8e0"/></svg>
<div class="t" style="left:28px;top:372.57px;font-size:10px;line-height:10px;color:#1e1e1e;font-family:'Liberation Sans',sans-serif;transform:scaleX(1.0000);transform-origin:0 0;">high_graph.jpg</div>
<svg style="position:absolute;left:14px;top:385.9px" width="11" height="11" viewBox="0 0 11 11"><rect x="0.5" y="0.5" width="10" height="10" fill="#f3f0a0" stroke="#6f6f60" stroke-width="0.8"/><rect x="1" y="1" width="4.5" height="4.5" fill="#fbfbe8"/><rect x="5.5" y="5.5" width="4.5" height="4.5" fill="#dfe890"/><path d="M5.5 0.5 V10.5 M0.5 5.5 H10.5" stroke="#6f6f60" stroke-width="0.8"/></svg>
<div class="t" style="left:28px;top:387.94px;font-size:10px;line-height:10px;color:#111;font-family:'Liberation Sans',sans-serif;transform:scaleX(1.0000);transform-origin:0 0;">ISC_batch.mat</div>
<svg style="position:absolute;left:15px;top:401.26px" width="9" height="12" viewBox="0 0 9 12"><path d="M0.5 0.5 H6 L8.5 3 V10.5 H0.5 Z" fill="#eeeeee" stroke="#9a9a9a" stroke-width="0.9"/><path d="M2 4 H7 M2 6 H7 M2 8 H7" stroke="#b0b0b0" stroke-width="0.8"/></svg>
<div class="t" style="left:28px;top:403.30px;font-size:10px;line-height:10px;color:#1e1e1e;font-family:'Liberation Sans',sans-serif;transform:scaleX(1.0000);transform-origin:0 0;">ISC_boot.txt</div>
</div>
<div style="left:0px;top:125px;width:1px;height:421px;background:#e2e2e2"></div>
<div style="left:234px;top:125px;width:12px;height:421px;background:#f0f0f0"></div>
<div style="left:1px;top:140px;width:233px;height:1px;background:#ededed"></div>
<div style="left:235px;top:241px;width:11px;height:194px;background:#cdcdcd"></div>
<svg style="position:absolute;left:235px;top:144px" width="9" height="6" viewBox="0 0 9 6"><path d="M1.5 4.5 L4.5 1.5 L7.5 4.5" stroke="#555" stroke-width="1.2" fill="none"/></svg>
<svg style="position:absolute;left:235px;top:535px" width="9" height="6" viewBox="0 0 9 6"><path d="M1.5 1.5 L4.5 4.5 L7.5 1.5" stroke="#555" stroke-width="1.2" fill="none"/></svg>
<div style="left:0px;top:546px;width:246px;height:1px;background:#b4b4b4"></div>
<div style="left:0px;top:547px;width:246px;height:14px;background:#fff"></div>
<div class="t" style="left:4px;top:550.15px;font-size:8.8px;line-height:8.8px;color:#222;font-family:'Liberation Sans',sans-serif;transform:scaleX(0.8948);transform-origin:0 0;">ISC_batch.mat  (MAT-file)</div>
<svg style="position:absolute;left:230px;top:550px" width="9" height="6" viewBox="0 0 9 6"><path d="M1 1 L4.5 4.5 L8 1" stroke="#555" stroke-width="1.2" fill="none"/></svg>
<div style="left:0px;top:561px;width:246px;height:115px;background:#fff;border:1px solid #a9a9a9"></div>
<div style="left:1px;top:562px;width:244px;height:15px;background:#fff"></div>
<div style="left:1px;top:577px;width:244px;height:1px;background:#eeeeee"></div>
<svg style="position:absolute;left:4px;top:564px" width="12" height="12" viewBox="0 0 12 12"><rect x="0.5" y="0.5" width="11" height="11" fill="#fff" stroke="#888"/><path d="M6 0.5 V11.5 M0.5 6 H11.5" stroke="#888"/></svg>
<div class="t" style="left:19.5px;top:566.53px;font-size:8px;line-height:8px;color:#222;font-family:'Liberation Sans',sans-serif;transform:scaleX(0.9840);transform-origin:0 0;">Name</div>
<div style="left:131px;top:562px;width:1px;height:15px;background:#e8e8e8"></div>
<div class="t" style="left:135px;top:566.53px;font-size:8px;line-height:8px;color:#222;font-family:'Liberation Sans',sans-serif;transform:scaleX(1.0066);transform-origin:0 0;">Value</div>
<svg style="position:absolute;left:4px;top:581px" width="11" height="11" viewBox="0 0 11 11"><rect x="0.5" y="0.5" width="10" height="10" fill="#f6f0a8" stroke="#8a8a6a"/><path d="M3 3 H8 M3 5.5 H8 M3 8 H8" stroke="#6a6a4a" stroke-width="0.8"/></svg>
<div class="t" style="left:17px;top:581.53px;font-size:10px;line-height:10px;color:#222;font-family:'Liberation Sans',sans-serif;transform:scaleX(0.9868);transform-origin:0 0;">Params</div>
<div class="t" style="left:133px;top:581.53px;font-size:10px;line-height:10px;color:#222;font-family:'Liberation Sans',sans-serif;transform:scaleX(1.0381);transform-origin:0 0;">1x1 struct</div>
<div style="left:249px;top:112px;width:785px;height:565px;background:#fff;border:2px solid #536d91;border-right-color:#34547a;border-top:none"></div>
<div style="left:249px;top:112px;width:785px;height:13px;background:linear-gradient(#2a5d96,#154a84)"></div>
<div class="t" style="left:254px;top:116.22px;font-size:8.25px;line-height:8.25px;color:#ffffff;font-family:'Liberation Sans',sans-serif;transform:scaleX(1.0001);transform-origin:0 0;">Command Window</div>
<svg style="position:absolute;left:1020px;top:113px" width="10" height="10" viewBox="0 0 10 10"><circle cx="5" cy="5" r="4.3" fill="#2b5e96" stroke="#9fc0e6" stroke-width="1"/><path d="M2.7 3.8 H7.3 L5 6.6 Z" fill="#fff"/></svg>
<div style="left:251px;top:125px;width:781px;height:17px;background:#fffde3;border-bottom:1px solid #cfcfbf"></div>
<div class="t" style="left:256px;top:130.52px;font-size:7.65px;line-height:7.65px;color:#222;font-family:'Liberation Sans',sans-serif;">New to MATLAB? See resources for </div>
<div class="t" style="left:380.8611484375px;top:130.52px;font-size:7.65px;line-height:7.65px;color:#0b28d8;font-family:'Liberation Sans',sans-serif;text-decoration:underline">Getting Started</div>
<div class="t" style="left:432.31636328125px;top:130.52px;font-size:7.65px;line-height:7.65px;color:#222;font-family:'Liberation Sans',sans-serif;">.</div>
<svg style="position:absolute;left:1024px;top:128px" width="8" height="8" viewBox="0 0 8 8"><path d="M1.5 1.5 L6.5 6.5 M6.5 1.5 L1.5 6.5" stroke="#111" stroke-width="1.4"/></svg>
<div style="left:251px;top:142px;width:15px;height:533px;background:#f0f0f0"></div>
<div style="left:266px;top:142px;width:756px;height:522px;overflow:hidden">
<div class="t" style="left:3px;top:-2.31px;font-size:11.1px;line-height:11.1px;color:#3c3c3c;font-family:'Liberation Mono',monospace;">Realization number: 100000/100000</div>
<div class="t" style="left:3px;top:12.35px;font-size:11.1px;line-height:11.1px;color:#3c3c3c;font-family:'Liberation Mono',monospace;">Resampled ISC value: -0.0021618</div>
<div class="t" style="left:3px;top:27.01px;font-size:11.1px;line-height:11.1px;color:#3c3c3c;font-family:'Liberation Mono',monospace;">Realization number: 101000/100000</div>
<div class="t" style="left:3px;top:41.67px;font-size:11.1px;line-height:11.1px;color:#3c3c3c;font-family:'Liberation Mono',monospace;">Resampled ISC value: 6.9612e-05</div>
<div class="t" style="left:3px;top:56.33px;font-size:11.1px;line-height:11.1px;color:#3c3c3c;font-family:'Liberation Mono',monospace;">Realization number: 102000/100000</div>
<div class="t" style="left:3px;top:70.99px;font-size:11.1px;line-height:11.1px;color:#3c3c3c;font-family:'Liberation Mono',monospace;">Resampled ISC value: 0.00040546</div>
<div class="t" style="left:3px;top:85.65px;font-size:11.1px;line-height:11.1px;color:#3c3c3c;font-family:'Liberation Mono',monospace;">Finished at: 12-Apr-2023, 17:49:45.634</div>
<div class="t" style="left:3px;top:100.31px;font-size:11.1px;line-height:11.1px;color:#3c3c3c;font-family:'Liberation Mono',monospace;">Started at: 12-Apr-2023, 17:49:46.111</div>
<div class="t" style="left:3px;top:114.97px;font-size:11.1px;line-height:11.1px;color:#3c3c3c;font-family:'Liberation Mono',monospace;">w424418</div>
<div class="t" style="left:3px;top:129.63px;font-size:11.1px;line-height:11.1px;color:#3c3c3c;font-family:'Liberation Mono',monospace;">: E:\Vol_ISC\Replication_Error\stats/vals1Session2</div>
<div class="t" style="left:3px;top:144.29px;font-size:11.1px;line-height:11.1px;color:#3c3c3c;font-family:'Liberation Mono',monospace;">Time-window ISC not selected...</div>
<div class="t" style="left:3px;top:173.61px;font-size:11.1px;line-height:11.1px;color:#3c3c3c;font-family:'Liberation Mono',monospace;">ans =</div>
<div class="t" style="left:3px;top:202.93px;font-size:11.1px;line-height:11.1px;color:#3c3c3c;font-family:'Liberation Mono',monospace;">    '12-Apr-2023 17:49:46'</div>
<div class="t" style="left:3px;top:246.91px;font-size:11.1px;line-height:11.1px;color:#3c3c3c;font-family:'Liberation Mono',monospace;">ans =</div>
<div class="t" style="left:3px;top:276.23px;font-size:11.1px;line-height:11.1px;color:#3c3c3c;font-family:'Liberation Mono',monospace;">    '12-Apr-2023 17:49:46'</div>
<div class="t" style="left:3px;top:320.21px;font-size:11.1px;line-height:11.1px;color:#3c3c3c;font-family:'Liberation Mono',monospace;">Calculating session comparison statistics:</div>
<div class="t" style="left:3px;top:334.87px;font-size:11.1px;line-height:11.1px;color:#3c3c3c;font-family:'Liberation Mono',monospace;">Started at: 12-Apr-2023, 17:49:46.454</div>
<div class="t" style="left:3px;top:349.53px;font-size:11.1px;line-height:11.1px;color:#3c3c3c;font-family:'Liberation Mono',monospace;">x: 1/91</div>
<div class="t" style="left:3px;top:364.19px;font-size:11.1px;line-height:11.1px;color:#3c3c3c;font-family:'Liberation Mono',monospace;">x: 2/91</div>
<div class="t" style="left:3px;top:378.85px;font-size:11.1px;line-height:11.1px;color:#3c3c3c;font-family:'Liberation Mono',monospace;">x: 3/91</div>
<div class="t" style="left:3px;top:393.51px;font-size:11.1px;line-height:11.1px;color:#3c3c3c;font-family:'Liberation Mono',monospace;">x: 4/91</div>
<div class="t" style="left:3px;top:408.17px;font-size:11.1px;line-height:11.1px;color:#3c3c3c;font-family:'Liberation Mono',monospace;">x: 5/91</div>
<div class="t" style="left:3px;top:422.83px;font-size:11.1px;line-height:11.1px;color:#3c3c3c;font-family:'Liberation Mono',monospace;">x: 6/91</div>
<div class="t" style="left:3px;top:437.49px;font-size:11.1px;line-height:11.1px;color:#3c3c3c;font-family:'Liberation Mono',monospace;">x: 7/91</div>
<div class="t" style="left:3px;top:452.15px;font-size:11.1px;line-height:11.1px;color:#3c3c3c;font-family:'Liberation Mono',monospace;">x: 8/91</div>
<div class="t" style="left:3px;top:466.81px;font-size:11.1px;line-height:11.1px;color:#3c3c3c;font-family:'Liberation Mono',monospace;">x: 9/91</div>
<div class="t" style="left:3px;top:481.47px;font-size:11.1px;line-height:11.1px;color:#3c3c3c;font-family:'Liberation Mono',monospace;">x: 10/91</div>
<div class="t" style="left:3px;top:496.13px;font-size:11.1px;line-height:11.1px;color:#3c3c3c;font-family:'Liberation Mono',monospace;">x: 11/91</div>
</div>
<svg style="position:absolute;left:251px;top:649px" width="15" height="14" viewBox="0 0 15 14"><text x="1" y="11" font-size="12.5" font-family="Liberation Serif" font-style="italic" font-weight="bold" fill="#222">fx</text><path d="M8.5 11.5 H11.5 L10 13.5 Z" fill="#222"/></svg>
<div style="left:1022px;top:142px;width:10px;height:522px;background:#f0f0f0"></div>
<svg style="position:absolute;left:1023px;top:145px" width="9" height="6" viewBox="0 0 9 6"><path d="M2 4.5 L4.5 2 L7 4.5" stroke="#444" stroke-width="1.4" fill="none"/></svg>
<div style="left:1023px;top:645px;width:9px;height:8px;background:#cdcdcd"></div>
<svg style="position:absolute;left:1023px;top:656px" width="9" height="6" viewBox="0 0 9 6"><path d="M2 1.5 L4.5 4 L7 1.5" stroke="#444" stroke-width="1.4" fill="none"/></svg>
<div style="left:266px;top:664px;width:766px;height:11px;background:#f0f0f0"></div>
<div style="left:277px;top:665px;width:598px;height:9px;background:#cdcdcd"></div>
<svg style="position:absolute;left:268px;top:667px" width="6" height="8" viewBox="0 0 6 8"><path d="M4.5 1.5 L2 4 L4.5 6.5" stroke="#444" stroke-width="1.4" fill="none"/></svg>
<svg style="position:absolute;left:1013px;top:667px" width="6" height="8" viewBox="0 0 6 8"><path d="M1.5 1.5 L4 4 L1.5 6.5" stroke="#444" stroke-width="1.4" fill="none"/></svg>
<div style="left:1037px;top:112px;width:243px;height:564px;background:#f0f0f0"></div>
<div style="left:1037px;top:112px;width:243px;height:13px;background:linear-gradient(#fafafa,#e8e8e8)"></div>
<div class="t" style="left:1042px;top:114.92px;font-size:8.6px;line-height:8.6px;color:#333;font-family:'Liberation Sans',sans-serif;transform:scaleX(0.8983);transform-origin:0 0;">Workspace</div>
<svg style="position:absolute;left:1265px;top:113px" width="10" height="10" viewBox="0 0 10 10"><circle cx="5" cy="5" r="4.3" fill="#f6f6f6" stroke="#7a7a7a" stroke-width="0.9"/><path d="M2.9 3.9 H7.1 L5 6.4 Z" fill="#555"/></svg>
<div style="left:1038px;top:125px;width:241px;height:551px;background:#fff;border:1px solid #999"></div>
<div class="t" style="left:1043px;top:132.23px;font-size:8px;line-height:8px;color:#222;font-family:'Liberation Sans',sans-serif;transform:scaleX(1.0075);transform-origin:0 0;">Name</div>
<svg style="position:absolute;left:1066px;top:134px" width="7" height="4" viewBox="0 0 7 4"><path d="M0 3.5 L3.5 0 L7 3.5 Z" fill="#aaa"/></svg>
<div style="left:1124px;top:126px;width:1px;height:17px;background:#ececec"></div>
<div class="t" style="left:1129px;top:132.23px;font-size:8px;line-height:8px;color:#222;font-family:'Liberation Sans',sans-serif;transform:scaleX(1.0066);transform-origin:0 0;">Value</div>
<div style="left:1211px;top:126px;width:1px;height:17px;background:#ececec"></div>
<div style="left:1039px;top:143px;width:239px;height:1px;background:#f0f0f0"></div>
<div style="left:0px;top:677px;width:1280px;height:16px;background:#f0f0f0"></div>
<svg style="position:absolute;left:2px;top:680px" width="16" height="11" viewBox="0 0 16 11"><path d="M1.5 1 V10 M4.5 1 V10 M7.5 1 V10 M10.5 1 V10" stroke="#b5b5b5" stroke-width="1.6"/><path d="M13 7.5 L16.5 7.5 L14.75 5 Z" fill="#444"/></svg>
<div style="left:20px;top:680px;width:1px;height:11px;background:#cfcfcf"></div>
<div class="t" style="left:24px;top:681.01px;font-size:9.2px;line-height:9.2px;color:#222;font-family:'Liberation Sans',sans-serif;transform:scaleX(0.8067);transform-origin:0 0;">Busy</div>
<div style="left:0px;top:693px;width:1280px;height:27px;background:#1d2a3a"></div>
<svg style="position:absolute;left:10px;top:700px" width="12" height="13" viewBox="0 0 12 13"><path d="M0.5 1.5 L5.3 0.9 V5.8 H0.5 Z M6 0.8 L11.5 0.1 V5.8 H6 Z M0.5 6.5 H5.3 V11.4 L0.5 10.8 Z M6 6.5 H11.5 V12.2 L6 11.5 Z" fill="#fff"/></svg>
<svg style="position:absolute;left:41px;top:699px" width="14" height="15" viewBox="0 0 14 15"><circle cx="8.2" cy="5.8" r="4" fill="none" stroke="#e8e8e8" stroke-width="1.2"/><path d="M5.3 8.8 L1.5 12.8" stroke="#e8e8e8" stroke-width="1.4"/></svg>
<svg style="position:absolute;left:73px;top:700px" width="14" height="13" viewBox="0 0 14 13"><path d="M1 1.2 H10" stroke="#e8e8e8" stroke-width="1.2"/><rect x="1.6" y="3.6" width="7.8" height="5" fill="none" stroke="#e8e8e8" stroke-width="1.2"/><path d="M1 11.2 H10 M12.3 1 V11.8" stroke="#e8e8e8" stroke-width="1.2"/><circle cx="12.3" cy="4.6" r="1.1" fill="#fff"/></svg>
<svg style="position:absolute;left:106px;top:699px" width="15" height="14" viewBox="0 0 15 14"><path d="M0.5 2 H5 L6.5 3.5 H14 V13 H0.5 Z" fill="#f6c343"/><rect x="0.5" y="6" width="13.5" height="7" fill="#fbd35c"/><rect x="4" y="8.5" width="7" height="4.5" fill="#2a8ad8"/></svg>
<div style="left:101px;top:718px;width:27px;height:2px;background:#9ec2ec"></div>
<svg style="position:absolute;left:139px;top:698px" width="17" height="17" viewBox="0 0 17 17"><circle cx="8.5" cy="8.5" r="8" fill="#db4437"/><path d="M8.5 8.5 L15.5 4.5 A8 8 0 0 1 11 16 Z" fill="#f4c20d"/><path d="M8.5 8.5 L11 16 A8 8 0 0 1 1 5 Z" fill="#0f9d58"/><circle cx="8.5" cy="8.5" r="3.4" fill="#fff"/><circle cx="8.5" cy="8.5" r="2.6" fill="#4285f4"/><circle cx="12.5" cy="12.5" r="4" fill="#1d9a8a"/></svg>
<div style="left:133px;top:718px;width:27px;height:2px;background:#9ec2ec"></div>
<svg style="position:absolute;left:173px;top:699px" width="12" height="15" viewBox="0 0 12 15"><path d="M1.5 5.5 Q6 0.5 10.5 5.5 Q6 3 1.5 5.5 Z" fill="#f08a2a" stroke="#f08a2a" stroke-width="1"/><path d="M1.5 9.5 Q6 14.5 10.5 9.5 Q6 12 1.5 9.5 Z" fill="#f08a2a" stroke="#f08a2a" stroke-width="1"/><circle cx="1.5" cy="13" r="0.8" fill="#bbb"/></svg>
<div style="left:196px;top:693px;width:30px;height:27px;background:#3b4858"></div>
<svg style="position:absolute;left:202px;top:698px" width="18" height="17" viewBox="0 0 18 17"><path d="M1 9 L6 7.5 L9 1 L17 15 L13 13 L9 16 Z" fill="#e0682a"/><path d="M1 9 L6 7.5 L8 10 Z" fill="#5aa0e0"/><path d="M9 1 L17 15 L12.5 12 Z" fill="#b0301a"/></svg>
<div style="left:196px;top:718px;width:30px;height:2px;background:#9ec2ec"></div>
<svg style="position:absolute;left:236px;top:698px" width="18" height="18" viewBox="0 0 18 18"><circle cx="9" cy="9" r="8.5" fill="#1a73c8"/><path d="M9 0.5 A8.5 8.5 0 0 1 17.5 9 Q17 12 13 12 Q8 12 8 9 Q8 6 11 5 Q7 3 3 6 A8.5 8.5 0 0 1 9 0.5Z" fill="#3fcf6a"/><circle cx="10" cy="10" r="2.5" fill="#1d2a3a"/></svg>
<svg style="position:absolute;left:269px;top:699px" width="17" height="17" viewBox="0 0 17 17"><circle cx="8.5" cy="8.5" r="8" fill="#2ba0dc"/><path d="M3.5 8.5 L13 4.5 L11.5 12.5 L8 10.5 L6.5 12 L6.5 9.8 L11 6 L5.8 9.3 Z" fill="#fff"/></svg>
<div style="left:264px;top:718px;width:27px;height:2px;background:#9ec2ec"></div>
<svg style="position:absolute;left:301px;top:700px" width="18" height="13" viewBox="0 0 18 13"><rect x="0.5" y="0.5" width="17" height="12" rx="1" fill="#505050" stroke="#909090"/><rect x="2" y="3" width="14" height="8" fill="#2e2420"/></svg>
<div style="left:296px;top:718px;width:27px;height:2px;background:#9ec2ec"></div>
<svg style="position:absolute;left:334px;top:698px" width="18" height="18" viewBox="0 0 18 18"><circle cx="9" cy="9" r="8.5" fill="#7ea6d8"/><text x="9" y="13" font-size="11" text-anchor="middle" font-family="Liberation Serif" fill="#fff">R</text></svg>
<div style="left:329px;top:718px;width:27px;height:2px;background:#9ec2ec"></div>
<svg style="position:absolute;left:1035px;top:699px" width="15" height="15" viewBox="0 0 15 15"><circle cx="7.5" cy="7.5" r="7" fill="#f39c1e"/><circle cx="6.5" cy="6.5" r="5" fill="#f7ac2a"/></svg>
<div class="t" style="left:1056px;top:703.38px;font-size:9px;line-height:9px;color:#ffffff;font-family:'Liberation Sans',sans-serif;transform:scaleX(0.9945);transform-origin:0 0;">17°C</div>
<div class="t" style="left:1081px;top:703.38px;font-size:9px;line-height:9px;color:#ffffff;font-family:'Liberation Sans',sans-serif;transform:scaleX(1.0188);transform-origin:0 0;">Sunny</div>
<svg style="position:absolute;left:1117px;top:702px" width="10" height="7" viewBox="0 0 10 7"><path d="M1 6 L5 2 L9 6" stroke="#fff" stroke-width="1.2" fill="none"/></svg>
<svg style="position:absolute;left:1131px;top:701px" width="13" height="12" viewBox="0 0 13 12"><rect x="3" y="1" width="9" height="7" fill="none" stroke="#fff"/><path d="M1 3 V11 M3 10 H8" stroke="#fff"/></svg>
<svg style="position:absolute;left:1147px;top:700px" width="14" height="13" viewBox="0 0 14 13"><rect x="1" y="1" width="11" height="10" fill="none" stroke="#fff"/><rect x="3" y="3" width="5" height="4" fill="#fff"/><circle cx="11" cy="10" r="2.5" fill="#f39c1e"/></svg>
<svg style="position:absolute;left:1163px;top:701px" width="14" height="12" viewBox="0 0 14 12"><path d="M1 4 H4 L7 1 V11 L4 8 H1 Z" fill="none" stroke="#fff"/><path d="M9 4 Q10.5 6 9 8 M11 2.5 Q13.5 6 11 9.5" stroke="#fff" fill="none"/></svg>
<div class="t" style="left:1182px;top:703.30px;font-size:8.5px;line-height:8.5px;color:#ffffff;font-family:'Liberation Sans',sans-serif;transform:scaleX(0.8415);transform-origin:0 0;">ENG</div>
<div class="t" style="left:1209px;top:695.97px;font-size:8.3px;line-height:8.3px;color:#ffffff;font-family:'Liberation Sans',sans-serif;transform:scaleX(0.9058);transform-origin:0 0;">6:21 PM</div>
<div class="t" style="left:1206px;top:708.97px;font-size:8.3px;line-height:8.3px;color:#ffffff;font-family:'Liberation Sans',sans-serif;transform:scaleX(0.9208);transform-origin:0 0;">4/12/2023</div>
<div style="left:1275px;top:693px;width:1px;height:27px;background:#4a5563"></div>
<svg style="position:absolute;left:1251px;top:700px" width="14" height="13" viewBox="0 0 14 13"><path d="M1 1 H13 V9 H8 L6 12 L5 9 H1 Z" fill="none" stroke="#fff"/></svg>
</body></html>
